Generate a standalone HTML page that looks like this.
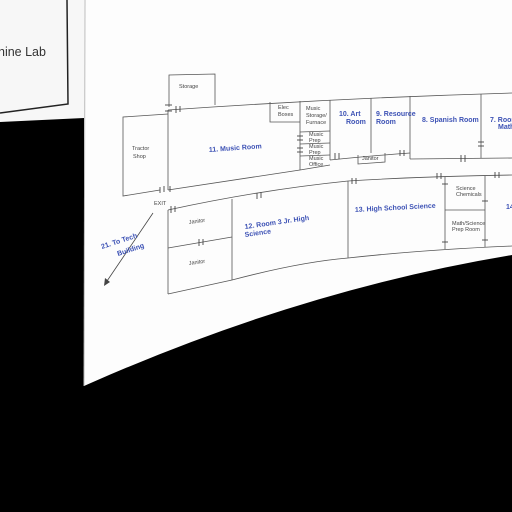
<!DOCTYPE html>
<html><head><style>
html,body{margin:0;padding:0;background:#000;}
svg{display:block}
text{font-family:"Liberation Sans",sans-serif;}
.b{fill:#3d52b5;font-weight:bold;font-size:7px}
.s{fill:#444;font-size:5.5px}
</style></head><body>
<svg width="512" height="512" viewBox="0 0 512 512" xmlns="http://www.w3.org/2000/svg">
<rect width="512" height="512" fill="#000"/>
<!-- left paper -->
<polygon points="0,0 84,0 84,118 0,122" fill="#f7f7f7"/>
<polyline points="67,0 68,104 0,113" fill="none" stroke="#222" stroke-width="1.5"/>
<text x="-2" y="56" style="font-size:12.5px;fill:#333">hine Lab</text>
<!-- main paper -->
<path d="M84,0 L512,0 L512,255 Q300,290 84,386 Z" fill="#fdfdfd"/>
<line x1="85" y1="0" x2="84" y2="386" stroke="#bbb" stroke-width="1"/>
<g fill="none" stroke="#555" stroke-width="0.8">
<!-- storage -->
<polyline points="169,107 169,75 215,74 215,105"/>
<!-- tractor shop -->
<polyline points="168,114 123,117 123,196 160,190"/>
<!-- north building outline -->
<path d="M168,110 Q340,98 512,93"/>
<line x1="168" y1="110" x2="168" y2="190"/>
<path d="M168,190 L300,170"/>
<path d="M300,170 L330,165"/>
<path d="M330,160 Q380,155 410,153"/>
<path d="M410,159 L512,158"/>
<line x1="300" y1="101" x2="300" y2="170"/>
<line x1="330" y1="100" x2="330" y2="160"/>
<line x1="371" y1="98" x2="371" y2="153"/>
<line x1="410" y1="96" x2="410" y2="159"/>
<line x1="481" y1="94" x2="481" y2="158"/>
<polyline points="270,102 270,122 300,122"/>
<line x1="300" y1="132" x2="330" y2="131"/>
<line x1="300" y1="144" x2="330" y2="143"/>
<line x1="300" y1="156" x2="330" y2="155"/>
<polyline points="358,155 358,164 385,162 385,153"/>
<!-- south building -->
<path d="M168,210 Q260,190 348,181 Q430,176 512,175"/>
<line x1="168" y1="210" x2="168" y2="294"/>
<path d="M168,294 L232,280 Q300,262 348,258 Q420,250 512,246"/>
<line x1="232" y1="199" x2="232" y2="280"/>
<line x1="168" y1="248" x2="232" y2="237"/>
<line x1="348" y1="181" x2="348" y2="258"/>
<line x1="445" y1="177" x2="445" y2="249"/>
<line x1="485" y1="176" x2="485" y2="247"/>
<line x1="445" y1="210" x2="485" y2="210"/>
<!-- arrow -->
<line x1="153" y1="213" x2="105" y2="284" stroke="#444"/>
</g>
<polygon points="104,286 105,278 110,282" fill="#444"/>
<!-- door marks -->
<g stroke="#444" stroke-width="0.9">
<line x1="165" y1="105" x2="172" y2="105"/><line x1="165" y1="111" x2="172" y2="111"/>
<line x1="176" y1="106" x2="176" y2="113"/><line x1="180" y1="106" x2="180" y2="112"/>
<line x1="160" y1="187" x2="160" y2="193"/><line x1="164" y1="186" x2="164" y2="192"/><line x1="170" y1="186" x2="170" y2="192"/>
<line x1="171" y1="206" x2="171" y2="213"/><line x1="175" y1="206" x2="175" y2="212"/>
<line x1="257" y1="193" x2="257" y2="199"/><line x1="261" y1="192" x2="261" y2="198"/>
<line x1="352" y1="178" x2="352" y2="184"/><line x1="356" y1="178" x2="356" y2="184"/>
<line x1="437" y1="173" x2="437" y2="179"/><line x1="441" y1="173" x2="441" y2="179"/>
<line x1="495" y1="172" x2="495" y2="178"/><line x1="499" y1="172" x2="499" y2="178"/>
<line x1="335" y1="153" x2="335" y2="159"/><line x1="339" y1="153" x2="339" y2="159"/>
<line x1="400" y1="150" x2="400" y2="156"/><line x1="404" y1="150" x2="404" y2="156"/>
<line x1="461" y1="155" x2="461" y2="162"/><line x1="465" y1="155" x2="465" y2="162"/>
<line x1="199" y1="239" x2="199" y2="246"/><line x1="203" y1="239" x2="203" y2="245"/>
<line x1="478" y1="142" x2="484" y2="142"/><line x1="478" y1="146" x2="484" y2="146"/>
<line x1="297" y1="136" x2="303" y2="136"/><line x1="297" y1="140" x2="303" y2="140"/>
<line x1="297" y1="148" x2="303" y2="148"/><line x1="297" y1="152" x2="303" y2="152"/>
<line x1="442" y1="184" x2="448" y2="184"/><line x1="442" y1="242" x2="448" y2="242"/>
<line x1="482" y1="201" x2="488" y2="201"/><line x1="482" y1="240" x2="488" y2="240"/>
</g>
<!-- labels -->
<text class="s" x="179" y="88">Storage</text>
<text class="s" x="132" y="150">Tractor</text><text class="s" x="133" y="158">Shop</text>
<text class="s" x="278" y="109">Elec</text><text class="s" x="278" y="116">Boxes</text>
<text class="s" x="306" y="110">Music</text><text class="s" x="306" y="117">Storage/</text><text class="s" x="306" y="124">Furnace</text>
<text class="s" x="309" y="136">Music</text><text class="s" x="309" y="142">Prep</text>
<text class="s" x="309" y="148">Music</text><text class="s" x="309" y="154">Prep</text>
<text class="s" x="309" y="160">Music</text><text class="s" x="309" y="166">Office</text>
<text class="s" x="362" y="160">Janitor</text>
<text class="s" x="154" y="205">EXIT</text>
<text class="s" x="189" y="224" transform="rotate(-8 189 224)">Janitor</text>
<text class="s" x="189" y="265" transform="rotate(-8 189 265)">Janitor</text>
<text class="s" x="456" y="190">Science</text><text class="s" x="456" y="196">Chemicals</text>
<text class="s" x="452" y="225">Math/Science</text><text class="s" x="452" y="231">Prep Room</text>
<text class="b" x="209" y="152" transform="rotate(-4 209 152)">11. Music Room</text>
<text class="b" x="339" y="116">10. Art</text><text class="b" x="346" y="124">Room</text>
<text class="b" x="376" y="116">9. Resource</text><text class="b" x="376" y="124">Room</text>
<text class="b" x="422" y="122">8. Spanish Room</text>
<text class="b" x="490" y="122">7. Room</text><text class="b" x="498" y="129">Math</text>
<text class="b" x="245" y="229" transform="rotate(-8 245 229)">12. Room 3 Jr. High</text>
<text class="b" x="245" y="237" transform="rotate(-8 245 237)">Science</text>
<text class="b" x="355" y="212" transform="rotate(-3 355 212)">13. High School Science</text>
<text class="b" x="506" y="209">14</text>
<text class="b" x="102" y="249" transform="rotate(-18 102 249)">21. To Tech</text>
<text class="b" x="118" y="256" transform="rotate(-18 118 256)">Building</text>
</svg>
</body></html>
